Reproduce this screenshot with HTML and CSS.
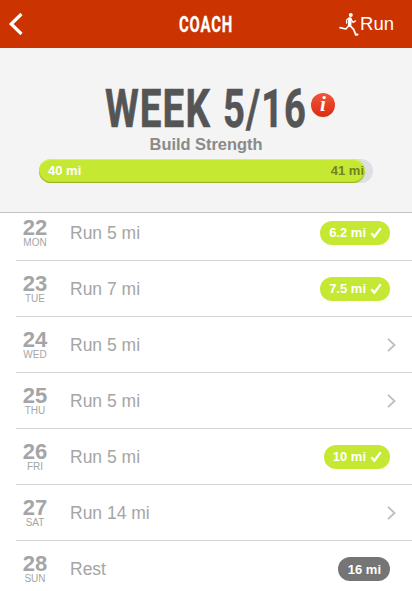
FILE: index.html
```html
<!DOCTYPE html>
<html lang="en">
<head>
    <meta charset="UTF-8">
    <meta name="viewport" content="width=device-width, initial-scale=1.0">
    <title>Coach</title>
    <link rel="stylesheet" href="styles.css">
</head>
<body>

    <!-- Top bar -->
    <header class="topbar">
        <a class="back" href="#" aria-label="Back">
            <svg width="15" height="24" viewBox="0 0 15 24"><path d="M13.5 2 3.2 12l10.3 10" fill="none" stroke="#fff" stroke-width="3.2"/></svg>
        </a>
        <svg class="title" width="54" height="30" viewBox="0 0 54 30">
            <text x="0" y="23" textLength="54" lengthAdjust="spacingAndGlyphs">COACH</text>
        </svg>
        <a class="run" href="#">
            <svg width="20" height="24" viewBox="0 0 20 24">
                <circle cx="11.8" cy="3" r="2" fill="#fff"/>
                <g fill="none" stroke="#fff" stroke-linecap="round" stroke-linejoin="round">
                    <path d="M11 7 10.6 13" stroke-width="3.6"/>
                    <path d="M10 6 7.6 8 7.6 11" stroke-width="1.3"/>
                    <path d="M12.3 7.5l1.8 3 2.4-1.6" stroke-width="1.3"/>
                    <path d="M10 13.5 6.8 17 1 15.6" stroke-width="1.7"/>
                    <path d="M11 13.5l3.8 4.2 2 5.2 1.8-.4" stroke-width="1.8"/>
                </g>
            </svg>
            <span>Run</span>
        </a>
    </header>

    <!-- Week summary -->
    <section class="summary">
        <div class="week">
            <svg width="202" height="54" viewBox="0 0 202 54">
                <text x="0" y="41" textLength="106" lengthAdjust="spacingAndGlyphs">WEEK</text>
                <text x="118" y="41" textLength="84" lengthAdjust="spacingAndGlyphs">5/16</text>
            </svg>
            <span class="info">i</span>
        </div>
        <h2>Build Strength</h2>
        <div class="progress">
            <div class="progress-bar">
                <span>40 mi</span>
                <span class="goal">41 mi</span>
            </div>
        </div>
    </section>

    <!-- Day list -->
    <ul class="days">
        <li>
            <div class="date"><b>22</b><small>MON</small></div>
            <p>Run 5 mi</p>
            <span class="badge">6.2 mi <svg width="12" height="12" viewBox="0 0 12 12"><path d="M1.3 6.2 4.4 9.6 10.8 1.1"/></svg></span>
        </li>
        <li>
            <div class="date"><b>23</b><small>TUE</small></div>
            <p>Run 7 mi</p>
            <span class="badge">7.5 mi <svg width="12" height="12" viewBox="0 0 12 12"><path d="M1.3 6.2 4.4 9.6 10.8 1.1"/></svg></span>
        </li>
        <li>
            <div class="date"><b>24</b><small>WED</small></div>
            <p>Run 5 mi</p>
            <svg class="arrow" width="9" height="14" viewBox="0 0 9 14"><path d="M1 .8 7.5 7 1 13.2"/></svg>
        </li>
        <li>
            <div class="date"><b>25</b><small>THU</small></div>
            <p>Run 5 mi</p>
            <svg class="arrow" width="9" height="14" viewBox="0 0 9 14"><path d="M1 .8 7.5 7 1 13.2"/></svg>
        </li>
        <li>
            <div class="date"><b>26</b><small>FRI</small></div>
            <p>Run 5 mi</p>
            <span class="badge">10 mi <svg width="12" height="12" viewBox="0 0 12 12"><path d="M1.3 6.2 4.4 9.6 10.8 1.1"/></svg></span>
        </li>
        <li>
            <div class="date"><b>27</b><small>SAT</small></div>
            <p>Run 14 mi</p>
            <svg class="arrow" width="9" height="14" viewBox="0 0 9 14"><path d="M1 .8 7.5 7 1 13.2"/></svg>
        </li>
        <li>
            <div class="date"><b>28</b><small>SUN</small></div>
            <p>Rest</p>
            <span class="badge total">16 mi</span>
        </li>
    </ul>

</body>
</html>
```
FILE: styles.css
```css
/* General reset */
* {
    margin: 0;
    padding: 0;
    box-sizing: border-box;
}

body {
    height: 591px;
    overflow: hidden;
    background-color: #fff;
    font-family: "Liberation Sans", Arial, sans-serif;
    color: #a5a5a5;
}

svg {
    display: block;
    flex: none;
    overflow: visible;
}

a {
    color: #fff;
    text-decoration: none;
}

/* Top bar */
.topbar {
    display: grid;
    grid-template-columns: 1fr auto 1fr;
    align-items: center;
    height: 48px;
    padding: 0 18px 0 8px;
    background-color: #cb3301;
    box-shadow: 0 1px 0 #d9aea2;
}
.title {
    margin-left: 10px;
}
.title text {
    font: bold 22px Roboto, sans-serif;
    letter-spacing: 1.2px;
    fill: #fff;
    stroke: #fff;
    stroke-width: 0.3px;
}
.run {
    display: flex;
    align-items: center;
    justify-content: flex-end;
    gap: 1px;
    font-size: 18.5px;
}

/* Week summary */
.summary {
    height: 165px;
    padding-top: 38px;
    background-color: #f4f4f4;
    border-bottom: 1px solid #c4c4c4;
}
.week {
    display: flex;
    gap: 4px;
    height: 44px;
    margin-left: 105px;
}
.week text {
    font: bold 54px Roboto, sans-serif;
    letter-spacing: 1.5px;
    fill: #555;
    stroke: #555;
    stroke-width: 0.6px;
}
.info {
    width: 24px;
    height: 24px;
    margin-top: 7px;
    border-radius: 50%;
    background: linear-gradient(#f0563a, #d92c10);
    color: #fff;
    font: italic bold 21px/23px "Liberation Serif", serif;
    text-align: center;
}
.summary h2 {
    margin-top: 5px;
    font-size: 16.4px;
    line-height: 18px;
    text-align: center;
    color: #8a8a8a;
}

/* Progress bar */
.progress {
    width: 334px;
    height: 24px;
    margin: 6px 0 0 39px;
    border-radius: 12px;
    background-color: #dedfe3;
}
.progress-bar {
    display: flex;
    justify-content: space-between;
    width: 326px;
    height: 24px;
    padding: 0 1px 0 9px;
    border-radius: 12px;
    background-color: #c5e833;
    box-shadow: inset 0 -1px 1px #93ad25, inset 0 1px 1px #d8f35e;
    color: #fff;
    font-size: 13px;
    font-weight: bold;
    line-height: 24px;
}
.progress-bar .goal {
    color: #708222;
}

/* Day list */
.days {
    height: 378px;
    list-style: none;
}
.days li {
    display: flex;
    align-items: center;
    height: 56px;
    margin-left: 16px;
    padding: 0 22px 0 5px;
    border-bottom: 1px solid #d4d4d4;
}
.days li:first-child {
    height: 48px;
    padding-bottom: 8px;
}
.days li:last-child {
    border-bottom: none;
}
.date {
    width: 28px;
    text-align: center;
}
.date b {
    display: block;
    font-size: 22px;
    line-height: 20px;
}
.date small {
    display: block;
    font-size: 10px;
    line-height: 10px;
}
.days p {
    flex: 1;
    margin-left: 21px;
    padding-top: 1px;
    font-size: 17.5px;
    line-height: 21px;
}
.arrow {
    margin-right: -6px;
}
.arrow path {
    fill: none;
    stroke: #bdbdbd;
    stroke-width: 1.8;
}

/* Distance badges */
.badge {
    display: flex;
    align-items: center;
    gap: 4px;
    height: 24px;
    padding: 0 8px 0 9px;
    border-radius: 12px;
    background-color: #c5e833;
    color: #fff;
    font-size: 13px;
    font-weight: bold;
}
.badge path {
    fill: none;
    stroke: #fff;
    stroke-width: 2.4;
}
.badge.total {
    padding: 0 9px 0 10px;
    background-color: #757575;
}
```
